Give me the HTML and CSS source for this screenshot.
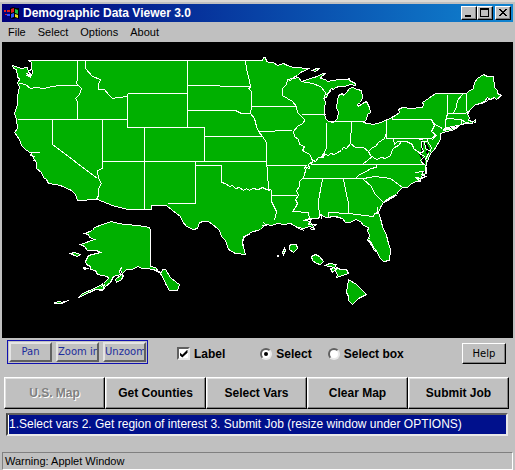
FILE: index.html
```html
<!DOCTYPE html>
<html lang="en">
<head>
<meta charset="utf-8">
<title>Demographic Data Viewer 3.0</title>
<link rel="stylesheet" href="styles.css">
</head>
<body>
<div class="window">
  <header class="titlebar">
    <svg class="logo" viewBox="0 0 16 16" aria-hidden="true">
      <path fill="#000" d="M6 3l3-1 3 1h3v11l-3-1-3 1-3-1z"/>
      <path fill="#e02020" d="M7 4l3-1v4l-3 1zM0 5h2v2H0zM3 5h3v2H3zM1 9h2v1H1z"/>
      <path fill="#20c040" d="M11 4l3 1v4l-3-1z"/>
      <path fill="#3050ff" d="M7 9l3-1v4l-3 1zM3 9h3v2H3z"/>
      <path fill="#f0e020" d="M11 9l3 1v3l-3-1z"/>
    </svg>
    <h1 class="title">Demographic Data Viewer 3.0</h1>
    <div class="captions">
      <button class="caption" aria-label="Minimize"><svg viewBox="0 0 12 10"><path d="M2 7h6v2H2z"/></svg></button>
      <button class="caption" aria-label="Maximize"><svg viewBox="0 0 12 10"><path fill-rule="evenodd" d="M1 0h9v9H1zM2 2v6h7V2z"/></svg></button>
      <button class="caption close" aria-label="Close"><svg viewBox="0 0 12 10"><path d="M2 1h2v1h1v1h2V2h1V1h2v1H9v1H8v1H7v1h1v1h1v1h1v1H8V7H7V6H5v1H4v1H2V7h1V6h1V5h1V4H4V3H3V2H2z"/></svg></button>
    </div>
  </header>
  <nav class="menu">
    <button>File</button><button>Select</button><button>Options</button><button>About</button>
  </nav>
  <svg class="map" viewBox="2 42 511 296" role="img" aria-label="Map of the United States">
    <g class="land" transform="translate(.5 .5)">
      <path d="M28 60H262L263 57 265 57 266 61 269 62 273 62 277 65 283 63 287 65 293 67 309 68 300 72 297 75 293 77 290 80 287 79 298 77 301 81 307 79 313 77 317 76 322 73 325 73 321 76 320 78 325 79 327 81 333 80 338 79 347 79 349 78 349 80 355 83 355 85 350 84 344 86 339 86 335 87 333 89 331 88 328 92 327 96 323 98 325 101 324 108 324 113 325 118 328 121 333 122 337 118 338 112 336 107 337 100 338 95 342 93 343 95 346 92 349 88 352 87 357 89 361 90 362 97 360 102 357 104 358 106 362 103 366 101 369 107 370 112 367 114 366 119 363 122 367 123 373 124 380 122 392 117 399 112 398 109 402 107 410 108 422 107 423 104 422 102 428 98 435 93H466L468 91 473 88 474 82 477 78 483 74 487 76 493 76 494 87 497 90 497 93 501 95 496 99 494 97 490 99 487 97 484 101 480 103 475 104 472 107 469 110 467 114 469 117 468 120 472 121 475 122 475 119 471 123 466 122 462 124 457 125 447 127 443 129 458 126 454 129 443 132 440 133 440 139 437 144 434 149 430 153 428 158 426 163 425 167 425 173 421 176 420 181 415 181 410 184 407 187 402 187 398 191 396 194 388 198 383 202 380 207 378 212 380 218 382 226 386 235 388 243 390 249 389 260 383 261 379 257 377 252 373 249 371 244 367 240 369 235 367 230 368 228 368 227 363 225 360 221 355 219 350 222 345 222 342 218 334 216 325 217 320 214 318 218 310 218 305 219 310 222 314 228 309 226 303 228 297 227 290 223 284 224 277 223 271 225 265 224 260 229 250 232 244 237 242 240 243 247 245 254 235 253 228 249 225 240 221 236 219 230 217 228 212 224 208 221 203 221 199 222 197 228 193 229 186 226 182 221 180 216 172 210 166 205H151V209H127L112 205 97 199 77 200 75 194 71 190 60 185 48 183 46 179 43 177 41 172 36 168 36 162 33 158 31 153 25 149 21 145 19 139 14 132 17 128 16 119 14 113 17 104 17 96 19 86 17 83 19 78 17 76 16 69 13 68 12 65 21 68 27 67 28 72 26 75 29 76 32 73 31 65 31 62Z"/>
      <path d="M111 221L118 223 125 224 137 225 149 227 150 230V266L155 267 158 271 161 272 162 269 165 269 170 277 176 282 179 284 177 290H169L165 283 162 276 159 272 153 269 146 268 141 268 138 266 131 269 126 269 122 273 120 270 121 267 119 271 120 274 113 276 110 282 105 286 103 289 95 289 89 292 78 297 82 293 94 288 103 283 108 278 107 276 97 274 95 270 90 269 90 266 86 264 85 261 88 255 100 252 96 250 87 250 84 246 80 244 94 239 89 237 88 234 84 233 92 230 94 227 105 223Z"/>
      <path d="M70 253l4-1 6 2-3 2-3-1zM115 279l6-5 2 1-2 4-5 3zM54 302l6-1 1 1 7-2-7 3-7 0zM83 267l4 1-3 1zM289 245l2-1h5l1 4-4 4-4-3zM282 252l2-4 1 2-2 4zM277 255h1v1h-1zM311 256l4-2 4 2 4 5-3 3-4-1-4-3zM325 265l4-2 7 1-2 3-6-1zM330 268l4-1 1 2-3 3zM336 267l4 2 6 0 2 4-6 2-6 2 1-3-2-3zM348 279l8 5 4 4 6 6-8 4-6 6-4-4 0-4-2-4zM312 70l4-2 3 0-4 3z"/>
      <g class="borders">
        <path d="M77 60L77 78 76 83 81 88 79 94 75 98 77 101V119M19 83L25 84 30 88 35 87 43 88 52 86 60 85H78M85 60V68L92 76 100 79 98 84 98 89 104 89 108 94 112 98 118 97 127 96M17 119H127M127 93V127H204M127 93H187M187 60V127M52 119V144L97 178M102 119V168L97 170 98 178 101 183 98 188 98 195 96 199M102 161H266M144 127V209M204 127V161M195 161V203H167M195 165H221V182L225 183 229 186 232 185 235 188 239 187 243 190 246 188 249 190 252 188 258 189 262 187 266 189 270 190M204 136H262M266 165H306L303 169"/>
        <path d="M187 85H219L220 86 250 86M245 60L246 68 249 80 250 87 248 88 251 91V106L250 113 254 118 256 126 258 131 262 136 266 142V161L267 172 268 188 271 190V201L276 211 274 220M187 110H235L241 113 250 113M251 106H295M258 131L292 130M271 195H296M287 79L286 84 282 88 282 95 292 101 296 106 297 112 304 119 303 123 298 125 293 131 294 136 298 139 299 144 304 146 302 150 309 154 311 157 312 161 308 164 309 168 306 167 303 177 299 181 299 186 296 190 298 195 295 199 297 203 295 207 292 211 308 212 309 218M301 114H325M301 81L312 83 320 86 325 92 324 98"/>
        <path d="M326 122V148L324 151 324 154 322 158M328 121H363M351 122L350 144M310 164L313 160 315 161 318 157 321 157 323 153 328 155 330 153 334 154 337 152 341 150 343 147 346 148 350 143 355 147 363 147 368 151 372 147 375 146 378 142 384 138 386 132 386 119M386 138H431L436 134M386 125V138M392 115V119H431L434 125 431 131 436 135 431 140M433 123L442 128M310 164H424M302 178H363L375 176 390 178 402 187M376 164L376 167 370 168 366 171 359 174 355 178M368 151L370 155 376 159 381 157 385 158 390 155 392 149 394 147 398 145 401 141 406 141 397 141 394 144 393 139M372 156L363 163M406 141L412 144 413 148 417 151 421 153M447 94V113L445 121 445 127M462 94L457 100 456 106 453 113M466 92V110M447 113L465 113 469 110M446 118L461 119 461 124M461 119L465 122M322 179L318 200 319 218M343 179L346 194 348 203 348 213M328 216V212L348 213 373 216 374 213 378 212M363 179L371 186 374 193 379 198 383 202"/>
      </g>
      <path class="bay" d="M421 140L422 149 420 154 423 162M425 143L428 149 426 153M423 158L424 164M421 171h3"/>
      <path class="coast" d="M419 139L427 138 427 141 421 141 421 146 423 151 419 153 424 156 420 160 424 165M424 141L425 148 430 151 431 147 427 141M428 153L425 159 427 162M415 172L423 171 421 174 425 176 421 178 415 177 420 181M426 166V173M30 152H39M30 154L35 157M29 155H32M26 73L31 75 28 71 32 68M27 75H30V77M17 77L19 79 18 82M303 220L311 218 308 224 316 224 310 228M310 229L314 229M242 240L245 235 250 234M243 236L242 246M263 222L266 225 261 225M298 228L304 230M443 130L455 128 448 129M465 123L472 123M326 217L336 216 344 219M321 213V218M367 239L370 241 373 247 377 251M369 240L371 246M368 237L370 239M101 286L104 284 102 290 94 289M477 104L484 102 490 98M384 202L397 194M377 206L377 213M326 94L331 90M33 160L36 161"/>
    </g>
  </svg>
  <section class="tools">
    <div class="zoombox">
      <button>Pan</button><button>Zoom in</button><button>Unzoom</button>
    </div>
    <label class="option"><input type="checkbox" checked>Label</label>
    <div class="modes">
      <label class="option"><input type="radio" name="mode" checked>Select</label>
      <label class="option"><input type="radio" name="mode">Select box</label>
    </div>
    <button class="help">Help</button>
  </section>
  <section class="actions">
    <button disabled>U.S. Map</button><button>Get Counties</button><button>Select Vars</button><button>Clear Map</button><button>Submit Job</button>
  </section>
  <div class="message"><input type="text" aria-label="Instructions" value="1.Select vars 2. Get region of interest 3. Submit Job (resize window under OPTIONS)"></div>
  <footer class="status">Warning: Applet Window</footer>
</div>
</body>
</html>
```
FILE: styles.css
```css
* { box-sizing: border-box; }

body {
  margin: 0;
  background: #c0c0c0;
  color: #000;
  font: 12px/16px "Liberation Sans", Arial, sans-serif;
}

button, input { font: inherit; color: inherit; margin: 0; }

button {
  padding: 0;
  border: 0;
  background: #c0c0c0;
}

.window {
  display: flex;
  flex-direction: column;
  min-height: 100vh;
  padding: 2px 2px 0;
  border-top: 2px solid #dcd9d4;
}

.titlebar {
  display: flex;
  align-items: center;
  height: 18px;
  padding: 0 2px;
  background: linear-gradient(90deg, #00007b, #1084d0);
}

.logo { width: 16px; height: 16px; margin-right: 3px; }

.title {
  flex: 1;
  margin: 0;
  color: #fff;
  font-size: 12px;
  line-height: 18px;
}

.captions { display: flex; }

.caption {
  width: 16px;
  height: 14px;
  padding: 1px;
  border: 1px solid;
  border-color: #fff #000 #000 #fff;
  box-shadow: inset -1px -1px #808080;
}

.caption svg { display: block; width: 12px; height: 10px; shape-rendering: crispEdges; }

.close { margin-left: 2px; }

.menu {
  display: flex;
  gap: 12px;
  height: 20px;
  padding: 0 6px;
  font-size: 11px;
}

.map {
  display: block;
  width: 100%;
  background: #000;
}

.land {
  fill: #00b000;
  stroke: #fff;
  stroke-width: 1;
  shape-rendering: crispEdges;
}

.borders, .coast { fill: none; }

.bay { fill: none; stroke: #000; stroke-width: 2; }

.tools {
  display: flex;
  align-items: center;
  height: 31px;
  padding: 0 7px 0 5px;
}

.zoombox {
  display: flex;
  gap: 4px;
  align-self: flex-start;
  margin: 2px 29px 0 0;
  padding: 1px;
  border: 1px solid #1010b0;
}

.zoombox button {
  width: 43px;
  height: 20px;
  overflow: hidden;
  border: 2px solid;
  border-color: #e4e4e4 #606060 #606060 #e4e4e4;
  color: #1c2c9c;
  font: 10px/14px "DejaVu Sans", sans-serif;
  white-space: nowrap;
}

.option {
  display: flex;
  align-items: center;
  gap: 4px;
  font-weight: bold;
}

.option input {
  appearance: none;
  display: grid;
  place-items: center;
  width: 13px;
  height: 13px;
  border: 2px solid;
  border-color: #606060 #e8e8e8 #e8e8e8 #606060;
  background: #fff;
}

.option input[type="radio"] { width: 12px; height: 12px; border-radius: 50%; }

.option input[type="radio"]:checked::before {
  content: "";
  width: 4px;
  height: 4px;
  border-radius: 50%;
  background: #000;
}

.option input[type="checkbox"]:checked::before {
  content: "";
  width: 8px;
  height: 8px;
  background: #000;
  clip-path: polygon(0 35%, 35% 65%, 100% 0, 100% 40%, 35% 100%, 0 70%);
}

.modes { display: flex; gap: 16px; margin-left: 35px; }

.help {
  width: 44px;
  height: 21px;
  margin-left: auto;
  border: 1px solid;
  border-color: #fff #000 #000 #fff;
  box-shadow: inset -1px -1px #808080;
  font: 10px/16px "DejaVu Sans", sans-serif;
}

.actions {
  display: grid;
  grid-template-columns: repeat(5, 1fr);
  margin: 8px 4px 0 2px;
}

.actions button {
  height: 32px;
  border: 1px solid;
  border-color: #fff #000 #000 #fff;
  box-shadow: inset -1px -1px #808080, inset 1px 1px #e0e0e0;
  font-weight: bold;
}

.actions button:disabled { color: #808080; text-shadow: 1px 1px #fff; }

.message {
  margin: 4px 5px 0 4px;
  border: 2px solid;
  border-color: #606060 #e8e8e8 #e8e8e8 #404040;
}

.message input {
  display: block;
  width: 100%;
  height: 19px;
  padding: 0 0 2px;
  border: 0;
  border-left: 1px solid #fff;
  border-radius: 0;
  background: #00108c;
  color: #fff;
}

.status {
  margin-top: auto;
  height: 18px;
  padding-left: 2px;
  border: 1px solid;
  border-color: #808080 #fff #fff #808080;
  font-size: 11px;
}
```
